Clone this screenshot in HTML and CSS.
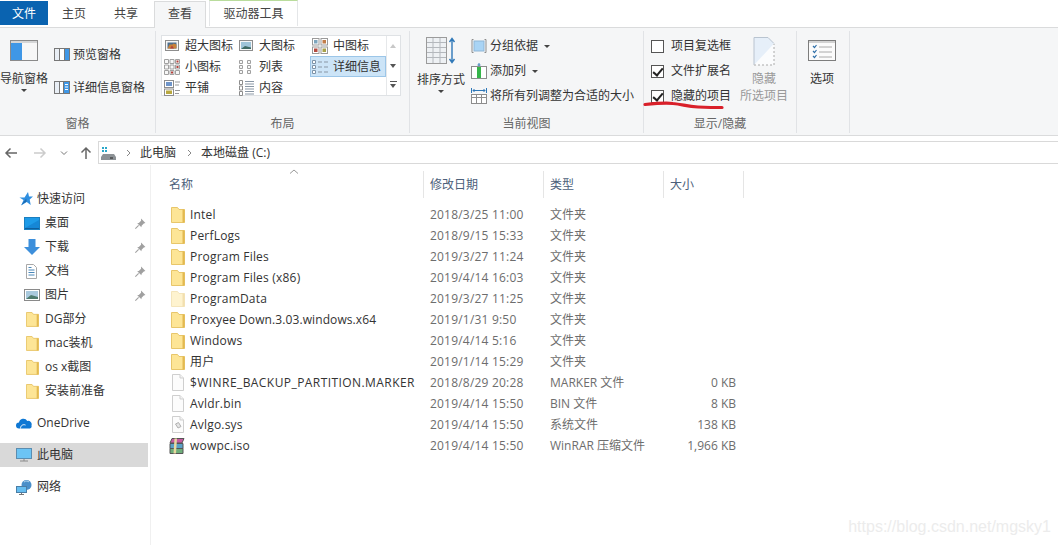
FILE: index.html
```html
<!DOCTYPE html>
<html lang="zh-CN">
<head>
    <meta charset="UTF-8">
    <title>本地磁盘 (C:)</title>
    <link rel="stylesheet" href="styles.css">
</head>
<body>
    <!-- shared icons -->
    <svg class="defs" width="0" height="0">
        <symbol id="folder" viewBox="0 0 14 17">
            <path d="M0.500 1.500h6l1.500 2h5.500v13h-13z" fill="#fde596" stroke="#e8c66a"/>
            <path d="M11.500 3.500h2v13h-2z" fill="#e3b950"/>
        </symbol>
        <symbol id="doc" viewBox="0 0 14 17">
            <path d="M1.500 0.500h7.500l3.500 3.500v12.500h-11z" fill="#fcfcfc" stroke="#cfcfcf"/>
            <path d="M9 0.500v3.500h3.500" fill="#f4f4f4" stroke="#cfcfcf"/>
        </symbol>
        <symbol id="pin" viewBox="0 0 10 10">
            <path d="M5.500 0.500l4 4-1.500 0.500-2 2-0.200 1.500-3.800-3.800 1.500-0.200 2-2z" fill="#a0a0a0"/>
            <path d="M3.300 6.700l-3 3" stroke="#a0a0a0"/>
        </symbol>
        <symbol id="g-xl" viewBox="0 0 14 14">
            <rect x="0.500" y="1.500" width="13" height="10" fill="#f6f6f6" stroke="#8d8d8d"/>
            <rect x="2.500" y="3.500" width="9" height="6" fill="#4d6f8f"/>
            <path d="M2.500 9.500l2-4h3l1-1 3 1v4z" fill="#c8823a"/>
            <path d="M5 9.500l2-3 2 3z" fill="#b5403a"/>
        </symbol>
        <symbol id="g-l" viewBox="0 0 14 14">
            <rect x="0.500" y="1.500" width="13" height="10" fill="#f6f6f6" stroke="#8d8d8d"/>
            <rect x="2" y="3" width="10" height="7" fill="#9fc4d8"/>
            <path d="M2 10l4-3 6 1.500V10z" fill="#3f6a63"/>
        </symbol>
        <symbol id="g-m" viewBox="0 0 16 16">
            <rect x="0.500" y="0.500" width="6.500" height="6.500" fill="#fff" stroke="#9a9a9a"/>
            <rect x="9" y="0.500" width="6.500" height="6.500" fill="#fff" stroke="#9a9a9a"/>
            <rect x="0.500" y="9" width="6.500" height="6.500" fill="#fff" stroke="#9a9a9a"/>
            <rect x="9" y="9" width="6.500" height="6.500" fill="#fff" stroke="#9a9a9a"/>
            <rect x="2" y="2" width="3.500" height="3.500" fill="#7da5bd"/>
            <rect x="10.500" y="2" width="3.500" height="3.500" fill="#c27d4a"/>
            <rect x="2" y="10.500" width="3.500" height="3.500" fill="#b54a3f"/>
            <rect x="10.500" y="10.500" width="3.500" height="3.500" fill="#a8a24a"/>
        </symbol>
        <symbol id="g-s" viewBox="0 0 16 16">
            <path d="M0.500 0.500h4v4h-4zM6 0.500h4v4H6zM11.500 0.500h4v4h-4zM0.500 6h4v4h-4zM6 6h4v4H6zM11.500 6h4v4h-4zM0.500 11.500h4v4h-4zM6 11.500h4v4H6zM11.500 11.500h4v4h-4z" fill="#f7f7f7" stroke="#a0a0a0"/>
            <path d="M12.500 1.500h2v2h-2zM12.500 7h2v2h-2zM7 12.500h2v2H7z" fill="#b5403a"/>
        </symbol>
        <symbol id="g-list" viewBox="0 0 16 16">
            <path d="M1.500 1.500h3v3h-3zM1.500 6.500h3v3h-3zM1.500 11.500h3v3h-3zM9.500 1.500h3v3h-3zM9.500 6.500h3v3h-3zM9.500 11.500h3v3h-3z" fill="#f7f7f7" stroke="#a0a0a0"/>
        </symbol>
        <symbol id="g-detail" viewBox="0 0 16 16">
            <path d="M0.500 1.500h3v3h-3zM0.500 6.500h3v3h-3zM0.500 11.500h3v3h-3z" fill="#fff" stroke="#7d93a8"/>
            <path d="M6 3h4M12 3h4M6 8h4M12 8h4M6 13h4M12 13h4" stroke="#8a97a5"/>
        </symbol>
        <symbol id="g-tile" viewBox="0 0 16 16">
            <rect x="0.500" y="0.500" width="9" height="7" fill="#fff" stroke="#8d8d8d"/>
            <rect x="2" y="2" width="6" height="4" fill="#6f95c9"/>
            <rect x="0.500" y="9" width="9" height="6.500" fill="#fff" stroke="#8d8d8d"/>
            <rect x="2" y="10.500" width="6" height="3.500" fill="#b8a83f"/>
            <path d="M11 2h5M11 5h4M11 10.500h5M11 13.500h4" stroke="#999"/>
        </symbol>
        <symbol id="g-content" viewBox="0 0 16 16">
            <path d="M1.500 0.500h3v4h-3zM1.500 6h3v4h-3zM1.500 11.500h3v4h-3z" fill="#fff" stroke="#8d8d8d"/>
            <path d="M7 1.500h9M7 4h9M7 6.500h9M7 9h9M7 11.500h9M7 14h9" stroke="#8a97a5"/>
        </symbol>
        <symbol id="pane-preview" viewBox="0 0 16 14">
            <rect x="0.500" y="0.500" width="15" height="12" fill="#fff" stroke="#777"/>
            <rect x="1" y="1" width="4" height="11" fill="#e8eef5"/>
            <rect x="11" y="1" width="4" height="11" fill="#3f97e6"/>
            <path d="M5.500 1v11M10.500 1v11" stroke="#777"/>
        </symbol>
        <symbol id="pane-detail" viewBox="0 0 16 14">
            <rect x="0.500" y="0.500" width="15" height="12" fill="#fff" stroke="#777"/>
            <rect x="1" y="1" width="4" height="11" fill="#e8eef5"/>
            <rect x="10" y="1" width="5" height="11" fill="#3f97e6"/>
            <path d="M5.500 1v11M9.500 1v11" stroke="#777"/>
            <path d="M11 3.500h3M11 6h3M11 8.500h3" stroke="#fff"/>
        </symbol>
    </svg>

    <!-- tab strip -->
    <div class="tabs">
        <div class="tab tab-file">文件</div>
        <div class="tab">主页</div>
        <div class="tab">共享</div>
        <div class="tab tab-active">查看</div>
        <div class="tab tab-tools">驱动器工具</div>
    </div>

    <!-- ribbon -->
    <div class="ribbon">
        <section class="group group-panes">
            <div class="group-body">
                <div class="big-btn nav-btn">
                    <svg class="big-icon" width="28" height="21" viewBox="0 0 28 21">
                        <rect x="0.500" y="0.500" width="27" height="20" fill="#f4f6f8" stroke="#8a8a8a"/>
                        <rect x="1" y="3" width="11" height="17" fill="#3f97e6"/>
                        <rect x="12" y="3" width="15" height="17" fill="#f7f7f7"/>
                        <path d="M1 2h26" stroke="#b5b5b5"/>
                    </svg>
                    <span class="big-label">导航窗格</span>
                    <i class="caret"></i>
                </div>
                <div class="pane-list">
                    <div class="small-item"><svg class="ic16" viewBox="0 0 16 14"><use href="#pane-preview"/></svg>预览窗格</div>
                    <div class="small-item"><svg class="ic16" viewBox="0 0 16 14"><use href="#pane-detail"/></svg>详细信息窗格</div>
                </div>
            </div>
            <div class="group-label">窗格</div>
        </section>

        <section class="group group-layout">
            <div class="group-body">
                <div class="gallery">
                    <div class="gallery-grid">
                        <div class="gallery-item"><svg class="ic14" viewBox="0 0 14 14"><use href="#g-xl"/></svg>超大图标</div>
                        <div class="gallery-item"><svg class="ic14" viewBox="0 0 14 14"><use href="#g-l"/></svg>大图标</div>
                        <div class="gallery-item"><svg class="ic-grid" viewBox="0 0 16 16"><use href="#g-m"/></svg>中图标</div>
                        <div class="gallery-item"><svg class="ic-grid" viewBox="0 0 16 16"><use href="#g-s"/></svg>小图标</div>
                        <div class="gallery-item"><svg class="ic-grid" viewBox="0 0 16 16"><use href="#g-list"/></svg>列表</div>
                        <div class="gallery-item gallery-selected"><svg class="ic-grid" viewBox="0 0 16 16"><use href="#g-detail"/></svg>详细信息</div>
                        <div class="gallery-item"><svg class="ic-grid" viewBox="0 0 16 16"><use href="#g-tile"/></svg>平铺</div>
                        <div class="gallery-item"><svg class="ic-grid" viewBox="0 0 16 16"><use href="#g-content"/></svg>内容</div>
                    </div>
                    <div class="gallery-scroll">
                        <i class="arrow-up"></i>
                        <i class="arrow-down"></i>
                        <i class="arrow-more"></i>
                    </div>
                </div>
            </div>
            <div class="group-label">布局</div>
        </section>

        <section class="group group-view">
            <div class="group-body">
                <div class="big-btn sort-btn">
                    <svg class="big-icon" width="30" height="27" viewBox="0 0 30 27">
                        <rect x="0.500" y="0.500" width="20" height="26" fill="#eef1f4" stroke="#9b9b9b"/>
                        <path d="M1 5.500h19M1 10.500h19M1 15.500h19M1 20.500h19M7 1v25M14 1v25" stroke="#b4b8bd"/>
                        <path d="M26 2v23M23.500 5l2.500-3.500 2.500 3.500M23.500 22l2.500 3.500 2.500-3.500" fill="none" stroke="#2f78b8" stroke-width="1.400"/>
                    </svg>
                    <span class="big-label">排序方式</span>
                    <i class="caret"></i>
                </div>
                <div class="view-list">
                    <div class="small-item">
                        <svg class="ic16" viewBox="0 0 16 16"><path d="M2.500 1.500h-1.500v13h1.500M13.500 1.500h1.500v13h-1.500" fill="none" stroke="#8d8d8d"/><rect x="3" y="3" width="10" height="10" fill="#a9d4f5" stroke="#8fb6d6"/></svg>
                        分组依据<i class="caret caret-inline"></i>
                    </div>
                    <div class="small-item">
                        <svg class="ic16" viewBox="0 0 16 16"><rect x="0.500" y="3.500" width="15" height="12" fill="#fff" stroke="#8d8d8d"/><rect x="6" y="4" width="4" height="11" fill="#35b54a"/><path d="M8 0v3M6.500 2h3" stroke="#3a7fb8"/></svg>
                        添加列<i class="caret caret-inline"></i>
                    </div>
                    <div class="small-item">
                        <svg class="ic16" viewBox="0 0 16 16"><path d="M0.500 0v5M15.500 0v5M2 2.500h12M3.500 1l-1.500 1.500 1.500 1.500M12.500 1l1.500 1.500-1.500 1.500" fill="none" stroke="#2f78b8"/><rect x="0.500" y="6.500" width="15" height="9" fill="#fff" stroke="#8d8d8d"/><path d="M0 9.500h16M5.500 7v8M10.500 7v8" stroke="#8d8d8d"/></svg>
                        将所有列调整为合适的大小
                    </div>
                </div>
            </div>
            <div class="group-label">当前视图</div>
        </section>

        <section class="group group-show">
            <div class="group-body">
                <div class="check-list">
                    <div class="check-item"><i class="check"></i>项目复选框</div>
                    <div class="check-item"><i class="check check-on"></i>文件扩展名</div>
                    <div class="check-item"><i class="check check-on"></i>隐藏的项目</div>
                </div>
                <div class="big-btn hide-btn">
                    <svg class="big-icon" width="22" height="29" viewBox="0 0 22 29">
                        <path d="M1 28V0.500h14l6 6V28z" fill="#e6eff9" stroke="none"/>
                        <path d="M1 28V0.500h14l6 6" fill="none" stroke="#b9c4d0"/>
                        <path d="M1 28L21 6.500V28z" fill="#fbfcfd"/>
                        <path d="M1 28h20V7" fill="none" stroke="#aaa" stroke-dasharray="2 2"/>
                    </svg>
                    <span class="big-label hide-label">隐藏<br>所选项目</span>
                </div>
            </div>
            <div class="group-label">显示/隐藏</div>
        </section>

        <section class="group group-options">
            <div class="group-body">
                <div class="big-btn opt-btn">
                    <svg class="big-icon" width="28" height="21" viewBox="0 0 28 21">
                        <rect x="0.500" y="0.500" width="27" height="20" fill="#fbfbfb" stroke="#7d7d7d"/>
                        <path d="M1 2h26" stroke="#aaa"/>
                        <path d="M5 6l1.500 1.500 2-2.500M5 11l1.500 1.500 2-2.500M5 16l1.500 1.500 2-2.500" fill="none" stroke="#2f6fa8" stroke-width="1.200"/>
                        <path d="M11 7h13M11 12h13M11 17h13" stroke="#aaa"/>
                    </svg>
                    <span class="big-label">选项</span>
                </div>
            </div>
            <div class="group-label"></div>
        </section>
    </div>

    <!-- address bar -->
    <div class="nav-row">
        <div class="nav-buttons">
            <svg width="14" height="12" viewBox="0 0 14 12"><path d="M13 6H2M6.500 1.500L2 6l4.500 4.500" fill="none" stroke="#666" stroke-width="1.500"/></svg>
            <svg class="nav-next" width="14" height="12" viewBox="0 0 14 12"><path d="M1 6h11M7.500 1.500L12 6l-4.500 4.500" fill="none" stroke="#ccc" stroke-width="1.500"/></svg>
            <svg class="nav-down" width="8" height="6" viewBox="0 0 8 6"><path d="M1 1.500l3 3 3-3" fill="none" stroke="#777"/></svg>
            <svg class="nav-up" width="12" height="14" viewBox="0 0 12 14"><path d="M6 13V2M1.500 6.500L6 2l4.500 4.500" fill="none" stroke="#666" stroke-width="1.500"/></svg>
        </div>
        <div class="address">
            <svg class="drive" width="15" height="14" viewBox="0 0 15 14">
                <path d="M1 1h2v2H1zM4 1h2v2H4zM1 4h2v2H1zM4 4h2v2H4z" fill="#2aa7c9"/>
                <path d="M2 8h11l2 3v3H0v-3z" fill="#8d9296"/>
                <path d="M9 11.500h3v1H9z" fill="#222"/>
            </svg>
            <svg class="crumb-sep" width="24" height="8" viewBox="0 0 24 8"><path d="M11 1l3 3-3 3" fill="none" stroke="#888"/></svg>
            <span>此电脑</span>
            <svg class="crumb-sep crumb-next" width="24" height="8" viewBox="0 0 24 8"><path d="M11 1l3 3-3 3" fill="none" stroke="#888"/></svg>
            <span>本地磁盘 (C:)</span>
        </div>
    </div>

    <div class="main">
        <!-- navigation tree -->
        <nav class="tree">
            <div class="tree-row tree-top">
                <svg class="tree-icon tree-star" width="14" height="14" viewBox="0 0 14 14"><path d="M9 0l1 4.500h4l-3.300 3 1 5.500-4-3-5.500 3.500 2.300-5.500L0.500 5.500h5z" fill="#2f8fe0"/><path d="M7.200 6.500l-5 6.500 5.500-3.500z" fill="#1c6cb3"/></svg>
                快速访问
            </div>
            <div class="tree-row tree-sub">
                <svg class="tree-icon" width="16" height="13" viewBox="0 0 16 13"><rect x="0.500" y="0.500" width="15" height="12" fill="#1e9be8" stroke="#1a7fc0"/><path d="M1 11l14-8v8z" fill="#1687d6"/><path d="M1 11.500h14" stroke="#0f5f9e"/></svg>
                桌面<svg class="pin" viewBox="0 0 10 10"><use href="#pin"/></svg>
            </div>
            <div class="tree-row tree-sub">
                <svg class="tree-icon" width="16" height="16" viewBox="0 0 16 16"><path d="M4.500 0h7v8H16l-8 8-8-8h4.500z" fill="#3d8fdb"/></svg>
                下载<svg class="pin" viewBox="0 0 10 10"><use href="#pin"/></svg>
            </div>
            <div class="tree-row tree-sub">
                <svg class="tree-icon tree-doc" width="11" height="15" viewBox="0 0 11 15"><path d="M0.500 0.500h7l3 3v11h-10z" fill="#fff" stroke="#a8a8a8"/><path d="M2.500 3.500h3M2.500 6h6M2.500 8.500h6M2.500 11h6" stroke="#4a87b8"/></svg>
                文档<svg class="pin" viewBox="0 0 10 10"><use href="#pin"/></svg>
            </div>
            <div class="tree-row tree-sub">
                <svg class="tree-icon" width="16" height="12" viewBox="0 0 16 12"><rect x="0.500" y="0.500" width="15" height="11" fill="#fff" stroke="#8a8a8a"/><rect x="2" y="2" width="12" height="8" fill="#a9c9dd"/><path d="M2 10l5-4 7 2v2z" fill="#4d7a6d"/></svg>
                图片<svg class="pin" viewBox="0 0 10 10"><use href="#pin"/></svg>
            </div>
            <div class="tree-row tree-sub"><svg class="tree-icon tree-folder" viewBox="0 0 14 17"><use href="#folder"/></svg>DG部分</div>
            <div class="tree-row tree-sub"><svg class="tree-icon tree-folder" viewBox="0 0 14 17"><use href="#folder"/></svg>mac装机</div>
            <div class="tree-row tree-sub"><svg class="tree-icon tree-folder" viewBox="0 0 14 17"><use href="#folder"/></svg>os x截图</div>
            <div class="tree-row tree-sub"><svg class="tree-icon tree-folder" viewBox="0 0 14 17"><use href="#folder"/></svg>安装前准备</div>

            <div class="tree-row tree-top tree-gap">
                <svg class="tree-icon" width="16" height="11" viewBox="0 0 16 11"><path d="M3 10.500a3 3 0 0 1 0-6 4.500 4.500 0 0 1 8.300-1.500 3.500 3.500 0 0 1 4.200 4.500 2.500 2.500 0 0 1-1.500 3z" fill="#0f78d4"/><path d="M4.500 10.500c0-3 2.500-4.500 5-3.500" fill="none" stroke="#fff"/></svg>
                OneDrive
            </div>
            <div class="tree-row tree-top tree-gap tree-selected">
                <svg class="tree-icon" width="16" height="14" viewBox="0 0 16 14"><rect x="0.500" y="0.500" width="15" height="10" fill="#6cc4f4" stroke="#5b8db0"/><path d="M4 13h8M8 11v2" stroke="#8a8a8a"/></svg>
                此电脑
            </div>
            <div class="tree-row tree-top tree-gap">
                <svg class="tree-icon" width="16" height="15" viewBox="0 0 16 15"><circle cx="10.500" cy="5" r="5" fill="#4a8fc9"/><path d="M8 2c2-1.500 4-1 5 0" fill="none" stroke="#b5d8f0"/><rect x="0.500" y="6.500" width="10" height="6" fill="#65bdf0" stroke="#4a7ea6"/><path d="M3 14.500h5M5.500 13v1" stroke="#777"/></svg>
                网络
            </div>
        </nav>

        <!-- file list -->
        <div class="files">
            <div class="sort-mark"><svg width="10" height="5" viewBox="0 0 10 5"><path d="M1 4.500L5 1l4 3.500" fill="none" stroke="#999"/></svg></div>
            <div class="file-head">
                <div class="col-name">名称</div>
                <div class="col-date">修改日期</div>
                <div class="col-type">类型</div>
                <div class="col-size">大小</div>
            </div>
            <div class="file-rows">
                <div class="file-row"><div class="col-name"><svg class="file-icon" viewBox="0 0 14 17"><use href="#folder"/></svg>Intel</div><div class="col-date">2018/3/25 11:00</div><div class="col-type">文件夹</div><div class="col-size"></div></div>
                <div class="file-row"><div class="col-name"><svg class="file-icon" viewBox="0 0 14 17"><use href="#folder"/></svg>PerfLogs</div><div class="col-date">2018/9/15 15:33</div><div class="col-type">文件夹</div><div class="col-size"></div></div>
                <div class="file-row"><div class="col-name"><svg class="file-icon" viewBox="0 0 14 17"><use href="#folder"/></svg>Program Files</div><div class="col-date">2019/3/27 11:24</div><div class="col-type">文件夹</div><div class="col-size"></div></div>
                <div class="file-row"><div class="col-name"><svg class="file-icon" viewBox="0 0 14 17"><use href="#folder"/></svg>Program Files (x86)</div><div class="col-date">2019/4/14 16:03</div><div class="col-type">文件夹</div><div class="col-size"></div></div>
                <div class="file-row"><div class="col-name"><svg class="file-icon file-hidden" viewBox="0 0 14 17"><use href="#folder"/></svg>ProgramData</div><div class="col-date">2019/3/27 11:25</div><div class="col-type">文件夹</div><div class="col-size"></div></div>
                <div class="file-row"><div class="col-name name-tight"><svg class="file-icon" viewBox="0 0 14 17"><use href="#folder"/></svg>Proxyee Down.3.03.windows.x64</div><div class="col-date">2019/1/31 9:50</div><div class="col-type">文件夹</div><div class="col-size"></div></div>
                <div class="file-row"><div class="col-name"><svg class="file-icon" viewBox="0 0 14 17"><use href="#folder"/></svg>Windows</div><div class="col-date">2019/4/14 5:16</div><div class="col-type">文件夹</div><div class="col-size"></div></div>
                <div class="file-row"><div class="col-name"><svg class="file-icon" viewBox="0 0 14 17"><use href="#folder"/></svg>用户</div><div class="col-date">2019/1/14 15:29</div><div class="col-type">文件夹</div><div class="col-size"></div></div>
                <div class="file-row"><div class="col-name name-caps"><svg class="file-icon" viewBox="0 0 14 17"><use href="#doc"/></svg>$WINRE_BACKUP_PARTITION.MARKER</div><div class="col-date">2018/8/29 20:28</div><div class="col-type">MARKER 文件</div><div class="col-size">0 KB</div></div>
                <div class="file-row"><div class="col-name"><svg class="file-icon" viewBox="0 0 14 17"><use href="#doc"/></svg>Avldr.bin</div><div class="col-date">2019/4/14 15:50</div><div class="col-type">BIN 文件</div><div class="col-size">8 KB</div></div>
                <div class="file-row"><div class="col-name">
                    <svg class="file-icon" viewBox="0 0 14 17"><use href="#doc"/><path d="M4.500 8l3-1.500 2.500 4-3 1.500z" fill="#e4e4e4" stroke="#b0b0b0"/></svg>Avlgo.sys</div><div class="col-date">2019/4/14 15:50</div><div class="col-type">系统文件</div><div class="col-size">138 KB</div></div>
                <div class="file-row"><div class="col-name">
                    <svg class="file-icon file-rar" viewBox="0 0 16 16">
                        <path d="M3 0.500h12l-2 4.500H1z" fill="#c65aa0" stroke="#555"/>
                        <path d="M1 5.500h13v5H1z" fill="#5aa0c6" stroke="#555"/>
                        <path d="M1 10.500h13v5H1z" fill="#6fae7a" stroke="#555"/>
                        <path d="M5.500 0.500h2.500l-1 15H4.500z" fill="#e8d9a0"/>
                    </svg>wowpc.iso</div><div class="col-date">2019/4/14 15:50</div><div class="col-type">WinRAR 压缩文件</div><div class="col-size">1,966 KB</div></div>
            </div>
        </div>
    </div>

    <!-- hand-drawn underline under 隐藏的项目 -->
    <svg class="scribble" width="84" height="12" viewBox="0 0 84 12">
        <path d="M3 4.500c10-1 20-2 28-1 10 1 14 3 25 3.500 8 0.300 16 0.500 24 0.500" fill="none" stroke="#d9202a" stroke-width="3.200" stroke-linecap="round"/>
    </svg>

    <div class="watermark">https://blog.csdn.net/mgsky1</div>
</body>
</html>
```

FILE: styles.css
```css
* {
    box-sizing: border-box;
}

html, body {
    height: 100%;
}

body {
    margin: 0;
    width: 1058px;
    height: 545px;
    overflow: hidden;
    background: #fff;
    color: #333;
    font-family: "Open Sans", "Noto Sans CJK SC", sans-serif;
    font-size: 12px;
    line-height: 16px;
    display: flex;
    flex-direction: column;
}

.defs {
    position: absolute;
}

/* tabs */
.tabs {
    height: 28px;
    display: flex;
    align-items: flex-start;
    border-bottom: 1px solid #dadbdc;
    flex: none;
}

.tab {
    width: 52px;
    height: 24px;
    margin-top: 1px;
    padding-top: 1px;
    display: flex;
    align-items: center;
    justify-content: center;
    color: #444;
}

.tab-file {
    width: 48px;
    background: #0a63b0;
    color: #fff;
}

.tab-active {
    width: 52px;
    height: 27px;
    margin-left: 2px;
    padding-top: 0;
    padding-bottom: 2px;
    background: #f5f6f7;
    border: 1px solid #dadbdc;
    border-bottom: none;
}

.tab-tools {
    width: 89px;
    height: 26px;
    margin-top: 0;
    margin-left: 3px;
    padding-top: 0;
    background: #fff;
    border: 1px solid #e4e6e8;
    border-top: 1px solid #b9dc9c;
    border-bottom: none;
}

/* ribbon */
.ribbon {
    height: 108px;
    flex: none;
    display: flex;
    background: #f5f6f7;
    border-bottom: 1px solid #dadbdc;
}

.group {
    display: flex;
    flex-direction: column;
    border-right: 1px solid #e1e3e6;
    margin: 3px 0 2px;
}

.group-panes { width: 156px; }
.group-layout { width: 254px; }
.group-view { width: 234px; }
.group-show { width: 153px; }
.group-options { width: 53px; }

.group-body {
    flex: 1;
    display: flex;
    min-height: 0;
}

.group-label {
    height: 17px;
    line-height: 16px;
    text-align: center;
    color: #666;
}

.big-btn {
    display: flex;
    flex-direction: column;
    align-items: center;
    flex: none;
}

.big-label {
    white-space: nowrap;
    color: #333;
}

.caret {
    width: 0;
    height: 0;
    border-left: 3px solid transparent;
    border-right: 3px solid transparent;
    border-top: 3px solid #444;
}

.caret-inline {
    margin-left: 6px;
    display: inline-block;
}

.nav-btn {
    width: 48px;
    padding-top: 9px;
}

.nav-btn .big-label {
    margin-top: 10px;
}

.nav-btn .caret {
    margin-top: 2px;
}

.pane-list {
    margin-left: 6px;
    padding-top: 16px;
    display: flex;
    flex-direction: column;
    gap: 17px;
}

.small-item {
    display: flex;
    align-items: center;
    height: 16px;
    white-space: nowrap;
}

.ic16 {
    width: 16px;
    height: 16px;
    margin-right: 3px;
    flex: none;
}

/* layout gallery */
.group-layout .group-body {
    padding: 4px 0 0 5px;
}

.gallery {
    width: 240px;
    height: 61px;
    display: flex;
    background: #fff;
    border: 1px solid #dfe2e5;
}

.gallery-grid {
    width: 224px;
    display: grid;
    grid-template-columns: 74px 74px 76px;
    grid-auto-rows: 21px;
    margin-top: -1px;
    padding-top: 0;
}

.gallery-item {
    display: flex;
    align-items: center;
    padding-left: 3px;
    white-space: nowrap;
    color: #333;
}

.ic14 {
    width: 14px;
    height: 14px;
    margin-right: 6px;
    flex: none;
}

.ic-grid {
    width: 16px;
    height: 16px;
    margin-left: -1px;
    margin-right: 5px;
    flex: none;
}

.gallery-selected {
    background: #cce4f7;
    border: 1px solid #9cc6e8;
    padding-left: 2px;
}

.gallery-scroll {
    flex: 1;
    display: flex;
    flex-direction: column;
    align-items: center;
    border-left: 1px solid #e6e8ea;
}

.arrow-up, .arrow-down, .arrow-more {
    height: 20px;
    width: 7px;
    position: relative;
    display: block;
}

.arrow-up::before, .arrow-down::before, .arrow-more::before {
    content: "";
    position: absolute;
    left: 0;
    top: 8px;
    border-left: 3.5px solid transparent;
    border-right: 3.5px solid transparent;
}

.arrow-up::before {
    border-bottom: 4px solid #c8c8c8;
}

.arrow-down::before {
    border-top: 4px solid #555;
}

.arrow-more::before {
    top: 9px;
    border-top: 4px solid #555;
}

.arrow-more::after {
    content: "";
    position: absolute;
    left: 0;
    top: 6px;
    width: 7px;
    height: 1px;
    background: #555;
}

/* current view */
.sort-btn {
    width: 48px;
    margin-left: 7px;
    padding-top: 6px;
}

.sort-btn .big-label {
    margin-top: 8px;
}

.sort-btn .caret {
    margin-top: 2px;
}

.view-list {
    margin-left: 6px;
    padding-top: 7px;
    display: flex;
    flex-direction: column;
    gap: 9px;
}

/* show / hide */
.check-list {
    margin-left: 7px;
    padding-top: 7px;
    width: 89px;
    display: flex;
    flex-direction: column;
    gap: 9px;
    flex: none;
}

.check-item {
    display: flex;
    align-items: center;
    height: 16px;
    white-space: nowrap;
}

.check {
    width: 13px;
    height: 13px;
    margin-right: 7px;
    border: 1px solid #555;
    background: #fff;
    position: relative;
    flex: none;
}

.check-on::after {
    content: "";
    position: absolute;
    left: 3px;
    top: 0;
    width: 4px;
    height: 8px;
    border-right: 2px solid #222;
    border-bottom: 2px solid #222;
    transform: rotate(40deg);
}

.hide-btn {
    width: 48px;
    padding-top: 6px;
}

.hide-label {
    margin-top: 4px;
    line-height: 17px;
    text-align: center;
    color: #999;
}

.opt-btn {
    width: 50px;
    padding-top: 9px;
}

.opt-btn .big-label {
    margin-top: 10px;
}

/* address bar */
.nav-row {
    height: 29px;
    flex: none;
    display: flex;
    align-items: flex-start;
    padding-top: 5px;
}

.nav-buttons {
    width: 98px;
    height: 23px;
    display: flex;
    align-items: center;
    padding-left: 4px;
    flex: none;
}

.nav-next {
    margin-left: 15px;
}

.nav-down {
    margin-left: 13px;
}

.nav-up {
    margin-left: 12px;
}

.address {
    flex: 1;
    height: 23px;
    display: flex;
    align-items: center;
    border: 1px solid #d9d9d9;
    border-right: none;
}

.drive {
    margin-left: 2px;
    flex: none;
}

.crumb-sep {
    flex: none;
}

.crumb-next {
    margin-left: 1px;
}

/* main area */
.main {
    flex: 1;
    display: flex;
    min-height: 0;
}

.tree {
    width: 151px;
    flex: none;
    padding-top: 22px;
    border-right: 1px solid #f0f0f0;
}

.tree-row {
    height: 24px;
    width: 148px;
    display: flex;
    align-items: center;
    white-space: nowrap;
    position: relative;
}

.tree-top {
    padding-left: 16px;
}

.tree-top .tree-icon {
    margin-right: 5px;
}

.tree-top .tree-star {
    margin-left: 3px;
    margin-right: 4px;
}

.tree-sub {
    padding-left: 24px;
}

.tree-sub .tree-icon {
    margin-right: 5px;
}

.tree-sub .tree-folder {
    width: 13px;
    height: 16px;
    margin-left: 2px;
    margin-right: 6px;
}

.tree-sub .tree-doc {
    margin-left: 2px;
    margin-right: 8px;
}

.tree-gap {
    margin-top: 8px;
}

.tree-selected {
    background: #d9d9d9;
}

.pin {
    width: 11px;
    height: 11px;
    position: absolute;
    left: 135px;
    top: 7px;
}

/* file list */
.files {
    flex: 1;
    position: relative;
    padding-left: 12px;
}

.sort-mark {
    position: absolute;
    left: 138px;
    top: 4px;
    line-height: 0;
}

.file-head {
    margin-top: 6px;
    height: 27px;
    display: flex;
    align-items: stretch;
    color: #4c607a;
}

.file-head > div {
    display: flex;
    align-items: center;
    border-right: 1px solid #e5e5e5;
    padding-left: 6px;
}

.file-head .col-name {
    width: 261px;
}

.file-head .col-date {
    width: 120px;
}

.file-head .col-type {
    width: 120px;
}

.file-head .col-size {
    width: 80px;
}

.file-rows {
    padding-top: 6px;
}

.file-row {
    height: 21px;
    display: flex;
    align-items: center;
    color: #6d6d6d;
}

.file-row .col-name {
    width: 261px;
    padding-left: 8px;
    color: #333;
    display: flex;
    align-items: center;
    white-space: nowrap;
    letter-spacing: 0.2px;
}

.file-row .name-caps {
    letter-spacing: 0.43px;
}

.file-row .name-tight {
    letter-spacing: 0.1px;
}

.file-row .col-date {
    width: 120px;
    padding-left: 6px;
    letter-spacing: 0.2px;
}

.file-row .col-type {
    width: 120px;
    padding-left: 6px;
}

.file-row .col-size {
    width: 72px;
    text-align: right;
}

.file-icon {
    width: 14px;
    height: 17px;
    margin-right: 5px;
    flex: none;
}

.file-hidden {
    opacity: 0.45;
}

.file-row .file-rar {
    width: 16px;
    height: 16px;
    margin-left: -2px;
    margin-right: 5px;
}

/* overlays */
.scribble {
    position: absolute;
    left: 642px;
    top: 100px;
}

.watermark {
    position: absolute;
    right: 7px;
    top: 518px;
    font-family: "Liberation Sans", sans-serif;
    font-size: 16px;
    line-height: 18px;
    color: #ececec;
}
```
